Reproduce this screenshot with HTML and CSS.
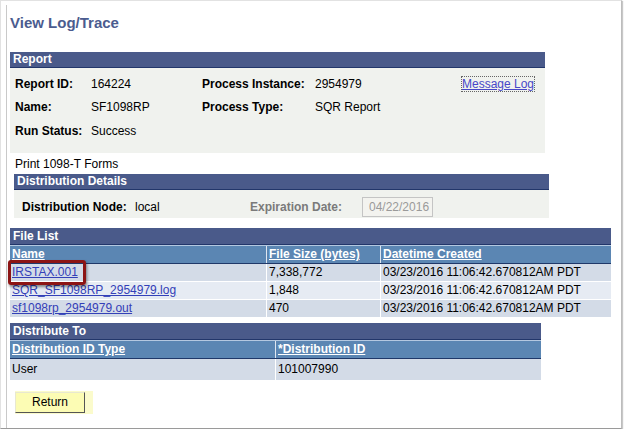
FILE: index.html
```html
<!DOCTYPE html>
<html>
<head>
  <meta charset="utf-8">
  <title>View Log/Trace</title>
  <link rel="stylesheet" href="styles.css">
</head>
<body>
  <div class="frame">
    <div class="page">
      <h1 class="title">View Log/Trace</h1>

      <div class="section report">
        <div class="bar">Report</div>
        <div class="panel report-grid">
          <span class="lbl">Report ID:</span><span>164224</span>
          <span class="lbl">Process Instance:</span><span>2954979</span>
          <a class="msglog" href="#">Message Log</a>
          <span class="lbl">Name:</span><span>SF1098RP</span>
          <span class="lbl">Process Type:</span><span>SQR Report</span><span></span>
          <span class="lbl">Run Status:</span><span>Success</span>
          <span></span><span></span><span></span>
        </div>
      </div>

      <div class="desc">Print 1098-T Forms</div>

      <div class="section dist">
        <div class="bar">Distribution Details</div>
        <div class="panel dist-grid">
          <span class="lbl">Distribution Node:</span><span>local</span>
          <span class="lbl muted">Expiration Date:</span>
          <span class="datebox">04/22/2016</span>
        </div>
      </div>

      <div class="section files">
        <div class="bar tall">File List</div>
        <table class="grid">
          <tr class="head">
            <th class="c-name"><a href="#">Name</a></th>
            <th class="c-size"><a href="#">File Size (bytes)</a></th>
            <th><a href="#">Datetime Created</a></th>
          </tr>
          <tr class="odd">
            <td class="hl-cell"><a href="#">IRSTAX.001</a><span class="callout"></span></td>
            <td>7,338,772</td>
            <td>03/23/2016 11:06:42.670812AM PDT</td>
          </tr>
          <tr class="even">
            <td><a href="#">SQR_SF1098RP_2954979.log</a></td>
            <td>1,848</td>
            <td>03/23/2016 11:06:42.670812AM PDT</td>
          </tr>
          <tr class="odd">
            <td><a href="#">sf1098rp_2954979.out</a></td>
            <td>470</td>
            <td>03/23/2016 11:06:42.670812AM PDT</td>
          </tr>
        </table>
      </div>

      <div class="section distto">
        <div class="bar tall">Distribute To</div>
        <table class="grid">
          <tr class="head">
            <th class="c-type"><a href="#">Distribution ID Type</a></th>
            <th><a href="#">*Distribution ID</a></th>
          </tr>
          <tr class="odd big">
            <td>User</td>
            <td>101007990</td>
          </tr>
        </table>
      </div>

      <div class="btn-wrap"><button class="btn">Return</button></div>
    </div>
  </div>
</body>
</html>
```

FILE: styles.css
```css
body {
  margin: 0;
  background: #fff;
  font-family: "Liberation Sans", Arial, sans-serif;
  font-size: 12px;
  color: #000;
}
.frame {
  width: 620px;
  height: 427px;
  border-top: 1px solid #e2e2e2;
  border-left: 1px solid #e2e2e2;
  border-right: 1px solid #bdbdbd;
  border-bottom: 1px solid #9a9a9a;
  box-shadow: 1px 1px 1px #c8c8c8;
  overflow: hidden;
}
.page {
  margin: 4px 0 0 5px;
  border-left: 1px solid #c9c9c9;
  padding: 8px 0 0 3px;
  height: 420px;
}
.title {
  margin: 0;
  font-size: 15px;
  line-height: 20px;
  color: #4b5c8f;
  font-weight: bold;
}
.section {
  margin-top: 19px;
}
.bar {
  background: #4a5a8a;
  color: #fff;
  font-weight: bold;
  height: 15px;
  line-height: 15px;
  padding-left: 3px;
  border-bottom: 1px solid #22366a;
}
.bar.tall {
  height: 16px;
  line-height: 17px;
}
.panel {
  background: #f0f2ee;
}
.report {
  width: 535px;
}
.report-grid {
  display: grid;
  grid-template-columns: 76px 111px 113px 147px auto;
  grid-auto-rows: 23.5px;
  align-items: center;
  padding: 4px 0 10px 5px;
}
.lbl {
  font-weight: bold;
}
.muted {
  color: #7a7a7a;
}
.msglog {
  color: #4747c8;
  outline: 1px dotted #666;
  justify-self: start;
}
.desc {
  margin: 4px 0 0 5px;
  line-height: 14px;
}
.dist {
  margin: 3px 0 0 4px;
  width: 535px;
}
.dist-grid {
  display: grid;
  grid-template-columns: 113px 115px 112px auto;
  align-items: center;
  padding: 7px 0 1px 8px;
}
.datebox {
  justify-self: start;
  width: 63px;
  height: 18px;
  line-height: 18px;
  padding-left: 6px;
  border: 1px solid #c4c4c4;
  background: #f3f3ef;
  color: #9a9a9a;
}
.files {
  margin-top: 10px;
  width: 601px;
}
.distto {
  margin-top: 6px;
  width: 531px;
}
.grid {
  width: 100%;
  border-collapse: collapse;
}
.grid th {
  background: #5b86b3;
  text-align: left;
  font-weight: bold;
  height: 17px;
  padding: 0 0 0 2px;
  border-top: 1px solid #b4c8e0;
  border-bottom: 1px solid #1f3869;
  border-left: 1px solid #dfe6f0;
}
.grid th:first-child,
.grid td:first-child {
  border-left: none;
}
.grid th a {
  color: #fff;
}
.grid td {
  height: 17px;
  padding: 0 0 0 2px;
  border-top: 1px solid #fff;
  border-left: 1px solid #fff;
}
.grid tr.head + tr td {
  border-top: none;
}
.grid td a {
  color: #3340b8;
}
.grid tr.odd td {
  background: #d3dbe7;
}
.grid tr.even td {
  background: #e6ebf3;
}
.grid tr.big td {
  height: 21px;
}
.c-name {
  width: 254px;
}
.c-size {
  width: 111px;
}
.c-type {
  width: 263px;
}
.hl-cell {
  position: relative;
}
.callout {
  position: absolute;
  left: -2px;
  top: -4px;
  width: 72px;
  height: 19px;
  border: 3px solid #8c1414;
  border-radius: 3px;
  box-shadow: 1px 2px 3px rgba(0,0,0,0.45);
}
.btn-wrap {
  display: inline-block;
  margin: 11px 0 0 5px;
  padding: 1px 8px 1px 0;
  background: #fbfbcc;
}
.btn {
  display: block;
  width: 70px;
  height: 21px;
  background: #fcfcb4;
  border: none;
  border-right: 1px solid #555;
  border-bottom: 1px solid #555;
  border-top: 1px solid #e8e8d0;
  border-left: 1px solid #e8e8d0;
  font-family: "Liberation Sans", Arial, sans-serif;
  font-size: 12px;
  color: #000;
  padding: 0;
}
```
